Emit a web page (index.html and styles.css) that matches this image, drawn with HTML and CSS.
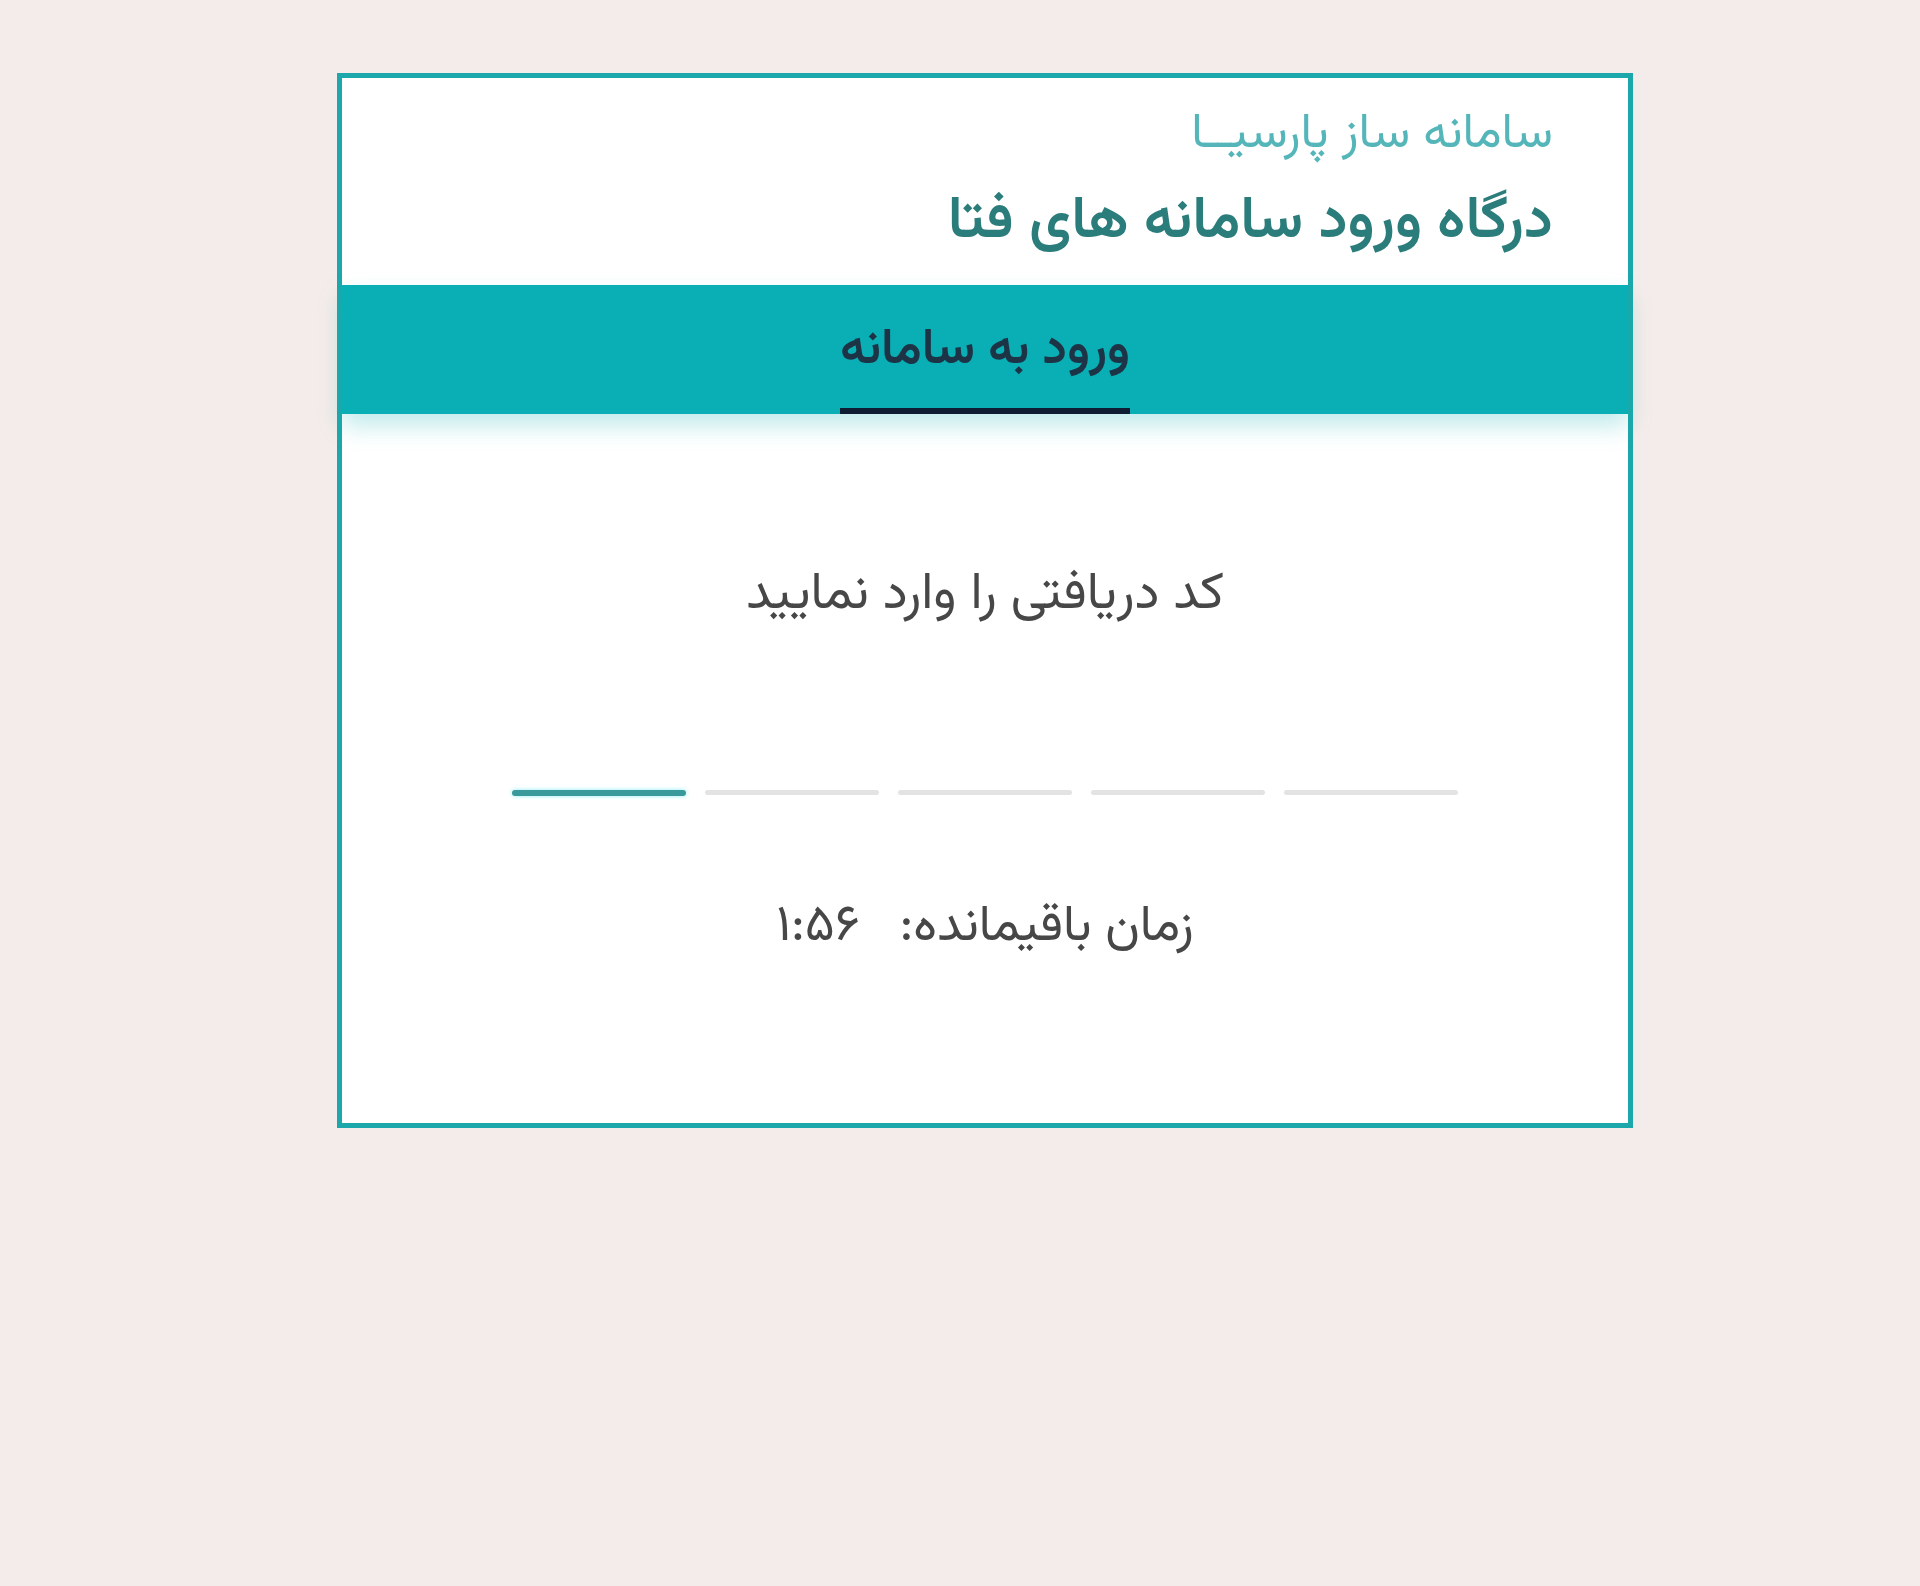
FILE: index.html
```html
<!DOCTYPE html>
<html lang="fa" dir="rtl">
<head>
<meta charset="utf-8">
<title>درگاه ورود سامانه های فتا</title>
<link rel="stylesheet" href="styles.css">
</head>
<body>
<div class="page">
  <div class="card">
    <header class="head">
      <div class="sub">سامانه ساز پارسیــا</div>
      <h1 class="title">درگاه ورود سامانه های فتا</h1>
    </header>
    <nav class="band">
      <div class="tab">ورود به سامانه</div>
    </nav>
    <main class="content">
      <p class="hint">کد دریافتی را وارد نمایید</p>
      <div class="otp">
        <span class="dash active"></span>
        <span class="dash"></span>
        <span class="dash"></span>
        <span class="dash"></span>
        <span class="dash"></span>
      </div>
      <p class="timer">زمان باقیمانده: <span class="time">۱:۵۶</span></p>
    </main>
  </div>
</div>
</body>
</html>
```
FILE: styles.css
```css
html, body {
  margin: 0;
  padding: 0;
  background: #f4ecea;
}
body {
  font-family: "Vazirmatn", "Vazir", "Noto Sans Arabic", "DejaVu Sans", sans-serif;
  color: #474747;
}
.page {
  padding: 73px 0 0 337px;
  direction: ltr;
}
.card {
  direction: rtl;
  width: 1296px;
  height: 1055px;
  box-sizing: border-box;
  border: 5px solid #1ca8ab;
  background: #ffffff;
  display: flex;
  flex-direction: column;
}
.head {
  height: 207px;
  box-sizing: border-box;
  padding: 22px 75px 0 75px;
  text-align: right;
}
.sub {
  font-size: 49px;
  line-height: 70px;
  color: #55b6ba;
}
.title {
  margin: 13px 0 0 0;
  font-size: 59px;
  line-height: 80px;
  font-weight: 600;
  color: #2a7d7a;
}
.band {
  height: 129px;
  background: #0aafb5;
  display: flex;
  justify-content: center;
  align-items: flex-end;
  box-shadow: 0 12px 22px rgba(10, 175, 181, 0.25);
  position: relative;
  z-index: 1;
}
.tab {
  font-size: 50px;
  font-weight: 600;
  color: #1c3446;
  line-height: 70px;
  padding-bottom: 22px;
  border-bottom: 6px solid #0f1d33;
}
.content {
  flex: 1;
  display: flex;
  flex-direction: column;
  align-items: center;
}
.hint {
  margin: 147px 0 0 0;
  font-size: 52px;
  line-height: 70px;
}
.otp {
  direction: ltr;
  margin-top: 159px;
  display: flex;
  gap: 19px;
}
.dash {
  display: block;
  width: 174px;
  height: 5px;
  border-radius: 3px;
  background: #e3e3e3;
}
.dash.active {
  height: 6px;
  background: #3a9a9b;
  box-shadow: 0 0 4px rgba(0, 220, 230, 0.45);
}
.timer {
  margin: 97px 0 0 0;
  font-size: 51px;
  line-height: 70px;
}
.time {
  margin-right: 26px;
}
```
